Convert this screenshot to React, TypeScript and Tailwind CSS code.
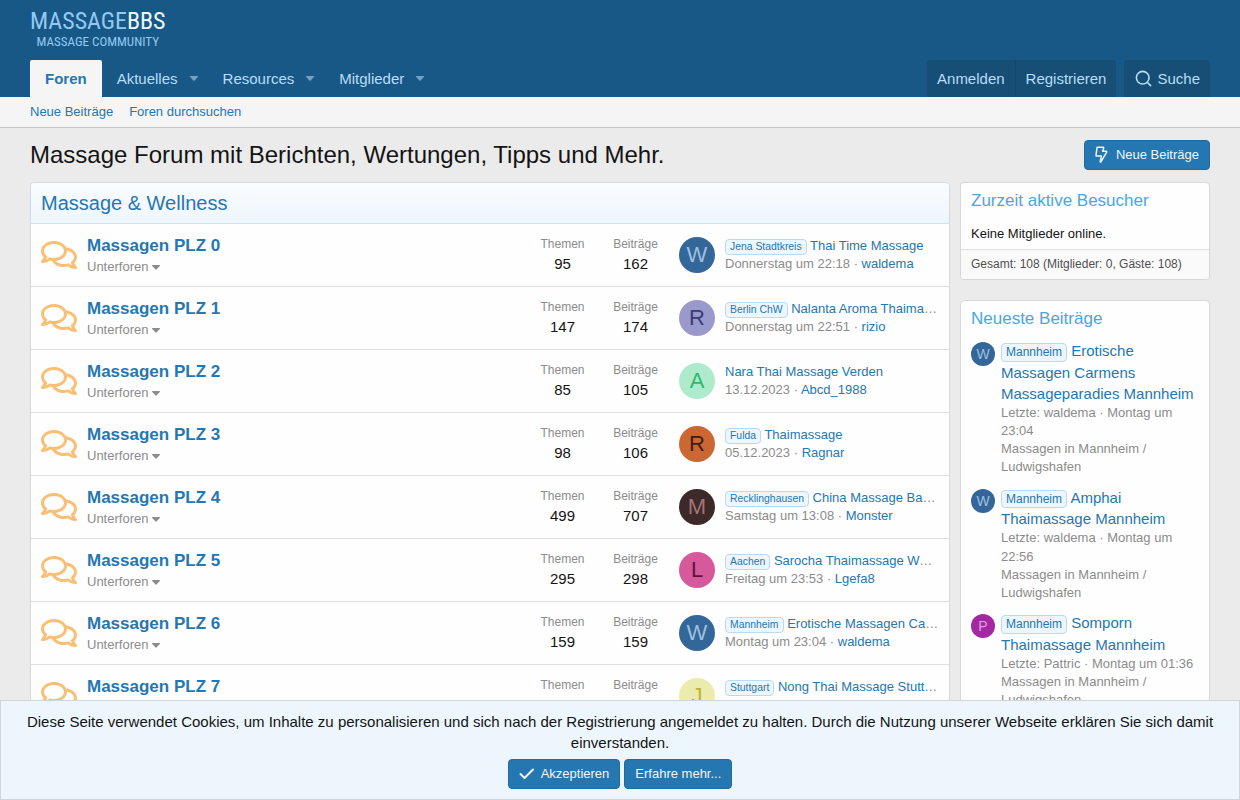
import { FaRegComments } from "react-icons/fa";
import { Search } from "lucide-react";

type Forum = {
  title: string;
  threads: number;
  posts: number;
  letter: string;
  avatar: string;
  prefix?: string;
  last: string;
  date: string;
  user: string;
};

const forums: Forum[] = [
  { title: "Massagen PLZ 0", threads: 95, posts: 162, letter: "W", avatar: "bg-[#336699] text-[#9fbfdf]", prefix: "Jena Stadtkreis", last: "Thai Time Massage", date: "Donnerstag um 22:18", user: "waldema" },
  { title: "Massagen PLZ 1", threads: 147, posts: 174, letter: "R", avatar: "bg-[#9999cc] text-[#3c3c77]", prefix: "Berlin ChW", last: "Nalanta Aroma Thaimassage Berlin", date: "Donnerstag um 22:51", user: "rizio" },
  { title: "Massagen PLZ 2", threads: 85, posts: 105, letter: "A", avatar: "bg-[#adebcc] text-[#2eb872]", last: "Nara Thai Massage Verden", date: "13.12.2023", user: "Abcd_1988" },
  { title: "Massagen PLZ 3", threads: 98, posts: 106, letter: "R", avatar: "bg-[#cc6633] text-[#3d1f0f]", prefix: "Fulda", last: "Thaimassage", date: "05.12.2023", user: "Ragnar" },
  { title: "Massagen PLZ 4", threads: 499, posts: 707, letter: "M", avatar: "bg-[#3d2929] text-[#a37575]", prefix: "Recklinghausen", last: "China Massage Bachstrasse", date: "Samstag um 13:08", user: "Monster" },
  { title: "Massagen PLZ 5", threads: 295, posts: 298, letter: "L", avatar: "bg-[#d6599c] text-[#5c1439]", prefix: "Aachen", last: "Sarocha Thaimassage Wellness", date: "Freitag um 23:53", user: "Lgefa8" },
  { title: "Massagen PLZ 6", threads: 159, posts: 159, letter: "W", avatar: "bg-[#336699] text-[#9fbfdf]", prefix: "Mannheim", last: "Erotische Massagen Carmens Massageparadies", date: "Montag um 23:04", user: "waldema" },
  { title: "Massagen PLZ 7", threads: 212, posts: 240, letter: "J", avatar: "bg-[#ebebad] text-[#b8b82e]", prefix: "Stuttgart", last: "Nong Thai Massage Stuttgart", date: "Montag um 20:15", user: "Jonas" },
];

const latest = [
  { letter: "W", avatar: "bg-[#336699] text-[#9fbfdf]", title: "Erotische Massagen Carmens Massageparadies Mannheim", meta: "Letzte: waldema · Montag um 23:04" },
  { letter: "W", avatar: "bg-[#336699] text-[#9fbfdf]", title: "Amphai Thaimassage Mannheim", meta: "Letzte: waldema · Montag um 22:56" },
  { letter: "P", avatar: "bg-[#a329a3] text-[#e699e6]", title: "Somporn Thaimassage Mannheim", meta: "Letzte: Pattric · Montag um 01:36" },
];

function Caret({ className }: { className: string }) {
  return (
    <svg viewBox="0 0 10 6" className={className} aria-hidden="true">
      <path d="M.6 0h8.8c.5 0 .8.6.4 1L5.5 5.6c-.3.3-.7.3-1 0L.2 1C-.2.6.1 0 .6 0z" fill="currentColor" />
    </svg>
  );
}

function Label({ children }: { children: string }) {
  return (
    <span className="inline-block rounded border border-[#b9daf2] bg-[#edf6fd] px-1 text-[80%] leading-[1.4] text-[#2577b1]">
      {children}
    </span>
  );
}

function NavTab({ children }: { children: string }) {
  return (
    <li className="flex text-[#b8ddf6]">
      <a href="#" className="py-2 pl-[15px] pr-1 leading-[21px]">{children}</a>
      <button type="button" aria-label={`${children} öffnen`} className="flex w-[26px] items-center justify-center pr-0.5 text-[#74a0c3]">
        <Caret className="h-[5px] w-[10px]" />
      </button>
    </li>
  );
}

function ForumRow({ forum }: { forum: Forum }) {
  return (
    <li className="flex items-center border-t border-[#dfdfdf] px-2.5 py-2.5 first:border-t-0">
      <FaRegComments className="h-9 w-9 shrink-0 text-[#fabf74]" aria-hidden="true" />
      <div className="min-w-0 flex-1 pl-2.5">
        <h3 className="text-[17px] font-bold leading-6 text-[#2577b1]"><a href="#">{forum.title}</a></h3>
        <button type="button" className="flex items-center gap-1 text-[13px] leading-[18px] text-[#8c8c8c]">
          Unterforen <Caret className="h-[5px] w-2" />
        </button>
      </div>
      <dl className="w-[73px] text-center">
        <dt className="text-xs leading-[17px] text-[#8c8c8c]">Themen</dt>
        <dd className="text-[15px] leading-[21px]">{forum.threads}</dd>
      </dl>
      <dl className="w-[73px] text-center">
        <dt className="text-xs leading-[17px] text-[#8c8c8c]">Beiträge</dt>
        <dd className="text-[15px] leading-[21px]">{forum.posts}</dd>
      </dl>
      <div className="ml-[7px] flex w-[260px] items-center gap-2.5">
        <a href="#" className={`flex h-9 w-9 shrink-0 items-center justify-center rounded-full text-[22px] leading-none ${forum.avatar}`}>{forum.letter}</a>
        <div className="min-w-0 flex-1 text-[13px] leading-[18px] text-[#8c8c8c]">
          <div className="truncate">
            {forum.prefix && <><Label>{forum.prefix}</Label>{" "}</>}
            <a href="#" className="text-[#2577b1]">{forum.last}</a>
          </div>
          <div className="truncate">{forum.date} · <a href="#" className="text-[#2577b1]">{forum.user}</a></div>
        </div>
      </div>
    </li>
  );
}

export default function App() {
  return (
    <div className="min-h-screen bg-[#ebebeb] pb-24 font-['Liberation_Sans',Arial,sans-serif] text-[15px] leading-[1.4] text-[#141414]">
      <header className="bg-[#185886]">
        <div className="mx-auto max-w-[1200px] px-2.5">
          <div className="flex h-[60px] items-start pt-[7px]">
            <a href="#" className="flex flex-col items-center text-[#93c9f2]">
              <span className="font-['Liberation_Sans_Narrow','Roboto_Condensed',Roboto,sans-serif] text-2xl font-normal leading-7">
                MASSAGE<span className="text-[#edf6fd]">BBS</span>
              </span>
              <span className="font-['Liberation_Sans_Narrow','Roboto_Condensed',Roboto,sans-serif] text-[13px] leading-[14px]">MASSAGE COMMUNITY</span>
            </a>
          </div>
          <div className="flex justify-between">
            <nav aria-label="Hauptnavigation">
              <ul className="flex">
                <li><a href="#" className="block rounded-t-[2px] bg-[#f5f5f5] px-[15px] py-2 font-bold leading-[21px] text-[#2577b1]">Foren</a></li>
                <NavTab>Aktuelles</NavTab>
                <NavTab>Resources</NavTab>
                <NavTab>Mitglieder</NavTab>
              </ul>
            </nav>
            <div className="flex gap-2 leading-[21px] text-[#b8ddf6]">
              <div className="flex rounded-t bg-[#174e76]">
                <a href="#" className="border-r border-[#14466b] px-2.5 py-2">Anmelden</a>
                <a href="#" className="px-2.5 py-2">Registrieren</a>
              </div>
              <a href="#" className="flex items-center gap-1 rounded-t bg-[#174e76] px-2.5 py-2">
                <Search size={19} strokeWidth={2} aria-hidden="true" />
                Suche
              </a>
            </div>
          </div>
        </div>
      </header>
      <nav aria-label="Unternavigation" className="border-b border-[#c6c6c6] bg-[#f5f5f5]">
        <div className="mx-auto flex max-w-[1200px] gap-4 px-2.5 py-1.5 text-[13px] leading-[18px] text-[#2577b1]">
          <a href="#">Neue Beiträge</a>
          <a href="#">Foren durchsuchen</a>
        </div>
      </nav>

      <main className="mx-auto max-w-[1200px] p-2.5">
        <div className="mb-2.5 flex items-center justify-between">
          <h1 className="text-2xl leading-[34px]">Massage Forum mit Berichten, Wertungen, Tipps und Mehr.</h1>
          <a href="#" className="flex h-[30px] items-center gap-[7px] rounded border border-[#216a9e] bg-[#2577b1] px-2.5 text-[13px] leading-[18px] text-[#edf6fd]">
            <svg viewBox="0 0 14 18" className="h-[18px] w-[14px]" fill="none" stroke="currentColor" strokeWidth="1.5" strokeLinejoin="round" aria-hidden="true">
              <path d="M2.6 1.2h5.6c.4 0 .6.3.5.7L7.6 5.2h3.6c.5 0 .8.5.5.9L5.9 15.8c-.3.5-.8.3-.7-.2l1.2-5.5H1.6c-.4 0-.7-.3-.6-.7L2 1.8c0-.3.3-.6.6-.6z" />
            </svg>
            Neue Beiträge
          </a>
        </div>
        <div className="flex items-start gap-2.5">
          <section className="min-w-0 flex-1 rounded border border-[#d4d9dc] bg-[#fefefe]">
            <h2 className="rounded-t border-b border-[#d3e1ea] bg-gradient-to-b from-[#fafcff] to-[#edf6fd] px-2.5 py-1.5 text-xl leading-7 text-[#2577b1]">
              <a href="#">Massage &amp; Wellness</a>
            </h2>
            <ul>
              {forums.map((f) => <ForumRow key={f.title} forum={f} />)}
            </ul>
          </section>

          <aside className="flex w-[250px] shrink-0 flex-col gap-5">
            <section className="rounded border border-[#d8d8d8] bg-[#fefefe]">
              <h3 className="px-2.5 py-1.5 text-[17px] leading-6 text-[#47a7eb]"><a href="#">Zurzeit aktive Besucher</a></h3>
              <p className="px-2.5 py-1.5 text-[13px] leading-[18px]">Keine Mitglieder online.</p>
              <p className="rounded-b border-t border-[#dfdfdf] bg-[#fafafa] px-2.5 py-1.5 text-xs leading-[17px] text-[#505050]">Gesamt: 108 (Mitglieder: 0, Gäste: 108)</p>
            </section>
            <section className="rounded border border-[#d8d8d8] bg-[#fefefe]">
              <h3 className="px-2.5 py-1.5 text-[17px] leading-6 text-[#47a7eb]"><a href="#">Neueste Beiträge</a></h3>
              <ul>
                {latest.map((p) => (
                  <li key={p.title} className="flex gap-1.5 px-2.5 pb-[7px] pt-[3px]">
                    <a href="#" className={`mt-0.5 flex h-6 w-6 shrink-0 items-center justify-center rounded-full text-sm leading-none ${p.avatar}`}>{p.letter}</a>
                    <div className="min-w-0 flex-1 text-[13px] leading-[1.4] text-[#8c8c8c]">
                      <a href="#" className="block text-[15px] leading-[1.4] text-[#2577b1]"><Label>Mannheim</Label> {p.title}</a>
                      <div>{p.meta}</div>
                      <div>Massagen in Mannheim / Ludwigshafen</div>
                    </div>
                  </li>
                ))}
              </ul>
            </section>
          </aside>
        </div>
      </main>

      <div role="region" aria-label="Cookies" className="fixed inset-x-0 bottom-0 border border-[#d0d5d9] bg-[#edf6fd] p-2.5 text-center leading-[21px]">
        <p>Diese Seite verwendet Cookies, um Inhalte zu personalisieren und sich nach der Registrierung angemeldet zu halten. Durch die Nutzung unserer Webseite erklären Sie sich damit einverstanden.</p>
        <div className="mt-1.5 flex justify-center gap-1 text-[13px] leading-[18px] text-[#edf6fd]">
          <button type="button" className="flex h-[30px] items-center gap-1.5 rounded border border-[#216a9e] bg-[#2577b1] px-2.5">
            <svg viewBox="0 0 16 12" className="h-3 w-4" fill="none" stroke="currentColor" strokeWidth="2" strokeLinecap="round" strokeLinejoin="round" aria-hidden="true">
              <path d="M1.5 6l4 4L14 1.5" />
            </svg>
            Akzeptieren
          </button>
          <a href="#" className="flex h-[30px] items-center rounded border border-[#216a9e] bg-[#2577b1] px-2.5">Erfahre mehr...</a>
        </div>
      </div>
    </div>
  );
}
